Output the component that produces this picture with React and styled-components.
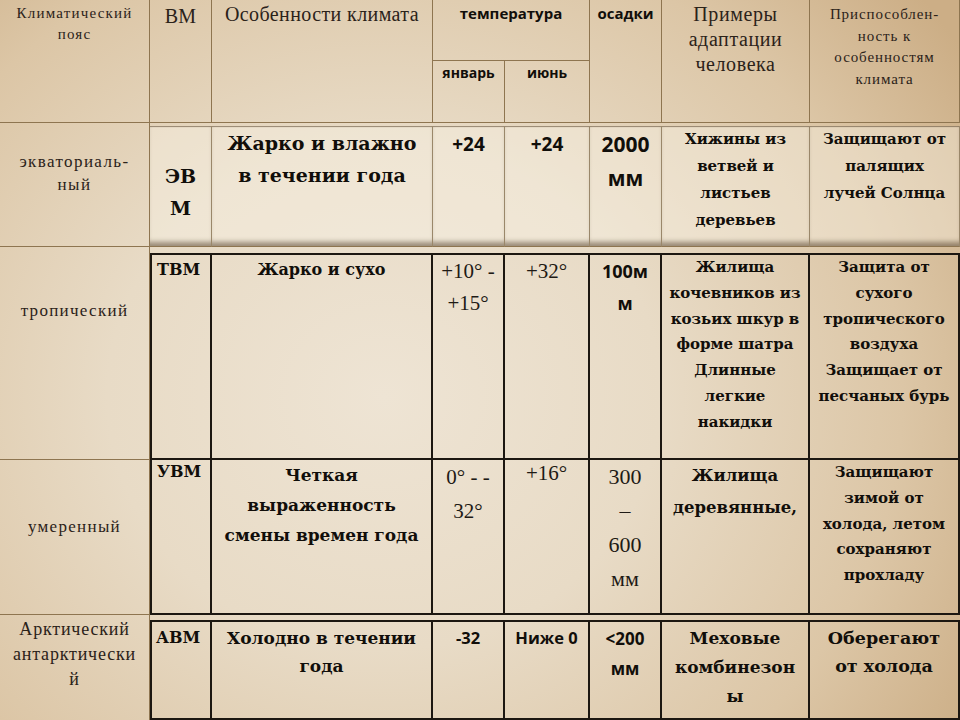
import React from 'react';
import styled, { createGlobalStyle, css } from 'styled-components';

const GlobalStyle = createGlobalStyle`
  html, body {
    margin: 0;
    padding: 0;
  }
  body {
    width: 960px;
    height: 720px;
    overflow: hidden;
    background: radial-gradient(ellipse 72% 88% at 40% 55%, #eee4d4 0%, #e8dbc6 40%, #dcc6a6 75%, #ccae86 100%);
  }
`;

const BROWN = '#8e7550';
const DARK = '#1c1711';

const variants = {
  thin: css`
    font-family: 'Liberation Serif', 'DejaVu Serif', serif;
    font-weight: 400;
    letter-spacing: 1.2px;
    color: #2b2219;
  `,
  roman: css`
    font-family: 'Liberation Serif', serif;
    font-weight: 400;
    color: #1e1a15;
  `,
  bold: css`
    font-family: 'DejaVu Serif', 'Liberation Serif', serif;
    font-weight: 700;
    color: #110e0a;
  `,
  sans: css`
    font-family: 'Open Sans', 'Liberation Sans', sans-serif;
    font-weight: 700;
    color: #110e0a;
  `,
};

const Table = styled.div`
  display: grid;
  grid-template-columns: 150px 62px 221px 72px 85px 72px 148px 150px;
  grid-template-rows: 61px 62px 124px 213px 155px 105px;
  width: 960px;
  height: 720px;
`;

const Cell = styled.div`
  ${(p) => variants[p.$font || 'thin']};
  grid-column: span ${(p) => p.$cols || 1};
  grid-row: span ${(p) => p.$rows || 1};
  font-size: ${(p) => p.$size || 16}px;
  line-height: ${(p) => p.$lh || 24}px;
  padding: ${(p) => p.$pt || 0}px 1px 0 ${(p) => p.$pl || 1}px;
  text-align: ${(p) => p.$align || 'center'};
  white-space: nowrap;
  overflow: hidden;
  border-right: 1px solid ${BROWN};
  border-bottom: 1px solid ${BROWN};
  min-width: 0;

  ${(p) =>
    p.$raised &&
    css`
      margin-top: 3px;
      background: rgba(250, 244, 232, 0.4);
      border-right-color: #9a876a;
      box-shadow: inset 0 2px 1px -1px rgba(90, 70, 45, 0.6),
        inset 0 -7px 5px -3px rgba(70, 50, 30, 0.5);
    `}

  ${(p) =>
    p.$dark &&
    css`
      border-right: 2px solid ${DARK};
      border-bottom: 2px solid ${DARK};
    `}

  ${(p) =>
    p.$first &&
    css`
      border-left: 2px solid ${DARK};
    `}

  ${(p) =>
    p.$gap &&
    css`
      margin-top: ${p.$gap}px;
      border-top: 2px solid ${DARK};
    `}
`;

const Zone = styled(Cell)`
  border-right: 1px solid ${BROWN};
  border-left: 0;
`;

const Lines = ({ children }) =>
  children.split('\n').map((line, i) => (
    <React.Fragment key={i}>
      {i > 0 && <br />}
      {line}
    </React.Fragment>
  ));

export default function App() {
  return (
    <>
      <GlobalStyle />
      <Table>
        {/* header */}
        <Zone $rows={2} $size={15} $lh={21} $pt={3}>
          <Lines>{'Климатический\nпояс'}</Lines>
        </Zone>
        <Cell $rows={2} $size={20} $pt={4} style={{ letterSpacing: '0.3px' }}>ВМ</Cell>
        <Cell $rows={2} $size={20} $pt={2} style={{ letterSpacing: '0.4px' }}>
          Особенности климата
        </Cell>
        <Cell $cols={2} $font="sans" $size={15} $lh={20} $pt={3}>температура</Cell>
        <Cell $rows={2} $font="sans" $size={15} $lh={20} $pt={3}>осадки</Cell>
        <Cell $rows={2} $size={20} $lh={25} $pt={2} style={{ letterSpacing: '0.6px' }}>
          <Lines>{'Примеры\nадаптации\nчеловека'}</Lines>
        </Cell>
        <Cell $rows={2} $size={15} $lh={21.5} $pt={4} style={{ letterSpacing: '0.9px' }}>
          <Lines>{'Приспособлен-\nность к\nособенностям\nклимата'}</Lines>
        </Cell>
        <Cell $font="sans" $size={14} $lh={20} $pt={2}>январь</Cell>
        <Cell $font="sans" $size={14} $lh={20} $pt={2}>июнь</Cell>

        {/* экваториальный */}
        <Zone $size={17} $lh={23} $pt={27} style={{ letterSpacing: '1.4px' }}>
          <Lines>{'экваториаль-\nный'}</Lines>
        </Zone>
        <Cell $raised $font="bold" $size={19} $lh={32} $pt={34}>
          <Lines>{'ЭВ\nМ'}</Lines>
        </Cell>
        <Cell $raised $font="bold" $size={19} $lh={32} $pt={1}>
          <Lines>{'Жарко и влажно\nв течении года'}</Lines>
        </Cell>
        <Cell $raised $font="sans" $size={19} $lh={34} $pt={1}>+24</Cell>
        <Cell $raised $font="sans" $size={19} $lh={34} $pt={1}>+24</Cell>
        <Cell $raised $font="sans" $size={21} $lh={34} $pt={1}>
          <Lines>{'2000\nмм'}</Lines>
        </Cell>
        <Cell $raised $font="bold" $size={15} $lh={27} $pt={0}>
          <Lines>{'Хижины из\nветвей и\nлистьев\nдеревьев'}</Lines>
        </Cell>
        <Cell $raised $font="bold" $size={15} $lh={27} $pt={0}>
          <Lines>{'Защищают от\nпалящих\nлучей Солнца'}</Lines>
        </Cell>

        {/* тропический */}
        <Zone $size={17} $lh={23} $pt={52} style={{ letterSpacing: '1.3px' }}>тропический</Zone>
        <Cell $dark $first $gap={6} $font="bold" $size={16} $pt={3} $align="left" $pl={5}>
          ТВМ
        </Cell>
        <Cell $dark $gap={6} $font="bold" $size={16} $pt={3}>Жарко и сухо</Cell>
        <Cell $dark $gap={6} $font="roman" $size={21} $lh={32} $pt={0}>
          <Lines>{'+10° -\n+15°'}</Lines>
        </Cell>
        <Cell $dark $gap={6} $font="roman" $size={21} $lh={32} $pt={0}>+32°</Cell>
        <Cell $dark $gap={6} $font="sans" $size={18} $lh={32} $pt={0}>
          <Lines>{'100м\nм'}</Lines>
        </Cell>
        <Cell $dark $gap={6} $font="bold" $size={15} $lh={25.8} $pt={0}>
          <Lines>{'Жилища\nкочевников из\nкозьих шкур в\nформе шатра\nДлинные\nлегкие\nнакидки'}</Lines>
        </Cell>
        <Cell $dark $gap={6} $font="bold" $size={15} $lh={25.8} $pt={0}>
          <Lines>{'Защита от\nсухого\nтропического\nвоздуха\nЗащищает от\nпесчаных бурь'}</Lines>
        </Cell>

        {/* умеренный */}
        <Zone $size={17} $lh={23} $pt={55} style={{ letterSpacing: '1.3px' }}>умеренный</Zone>
        <Cell $dark $first $font="bold" $size={16} $pt={0} $align="left" $pl={5}>УВМ</Cell>
        <Cell $dark $font="bold" $size={17} $lh={30} $pt={0}>
          <Lines>{'Четкая\nвыраженность\nсмены времен года'}</Lines>
        </Cell>
        <Cell $dark $font="roman" $size={21} $lh={34} $pt={0}>
          <Lines>{'0° - -\n32°'}</Lines>
        </Cell>
        <Cell $dark $font="roman" $size={21} $lh={26} $pt={0}>+16°</Cell>
        <Cell $dark $font="roman" $size={22} $lh={34} $pt={0}>
          <Lines>{'300\n–\n600\nмм'}</Lines>
        </Cell>
        <Cell $dark $font="bold" $size={16.5} $lh={32} $pt={0}>
          <Lines>{'Жилища\nдеревянные,'}</Lines>
        </Cell>
        <Cell $dark $font="bold" $size={15} $lh={25.8} $pt={0}>
          <Lines>{'Защищают\nзимой от\nхолода, летом\nсохраняют\nпрохладу'}</Lines>
        </Cell>

        {/* арктический */}
        <Zone $size={18} $lh={25} $pt={2} style={{ borderBottom: 0, letterSpacing: '0.8px' }}>
          <Lines>{'Арктический\nантарктически\nй'}</Lines>
        </Zone>
        <Cell $dark $first $gap={5} $font="bold" $size={16} $lh={28} $pt={2} $align="left" $pl={4}>
          АВМ
        </Cell>
        <Cell $dark $gap={5} $font="bold" $size={17} $lh={28} $pt={2}>
          <Lines>{'Холодно в течении\nгода'}</Lines>
        </Cell>
        <Cell $dark $gap={5} $font="sans" $size={16.5} $lh={28} $pt={2}>-32</Cell>
        <Cell $dark $gap={5} $font="sans" $size={16.5} $lh={28} $pt={2}>Ниже 0</Cell>
        <Cell $dark $gap={5} $font="sans" $size={17} $lh={30} $pt={2}>
          <Lines>{'<200\nмм'}</Lines>
        </Cell>
        <Cell $dark $gap={5} $font="bold" $size={17} $lh={29} $pt={2}>
          <Lines>{'Меховые\nкомбинезон\nы'}</Lines>
        </Cell>
        <Cell $dark $gap={5} $font="bold" $size={17.5} $lh={28} $pt={2}>
          <Lines>{'Оберегают\nот холода'}</Lines>
        </Cell>
      </Table>
    </>
  );
}
